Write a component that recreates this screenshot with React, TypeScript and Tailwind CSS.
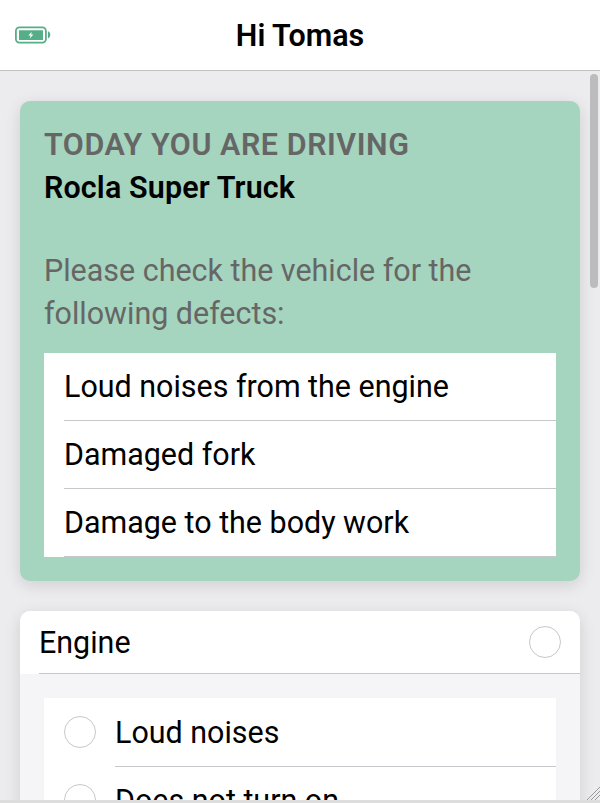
import React from 'react';

const defects = ['Loud noises from the engine', 'Damaged fork', 'Damage to the body work'];
const engineChecks = ['Loud noises', 'Does not turn on'];

function BatteryIcon() {
  return (
    <svg className="h-[18px] w-9" viewBox="0 0 36 18" fill="none">
      <rect x="0.9" y="1.4" width="30" height="15.2" rx="3.6" stroke="#55ae87" strokeWidth="1.8" />
      <rect x="4" y="4.2" width="24" height="9.8" rx="0.6" fill="#55ae87" />
      <path d="M33 5.3C36 6.2 36 11.4 33 12.4Z" fill="#55ae87" />
      <path d="M16.8 5.8L13.3 9.5H15.6L14.8 12.4L18.4 8.6H16.1Z" fill="white" />
    </svg>
  );
}

function Radio() {
  return <span className="size-8 shrink-0 rounded-full border border-[#c8c7cc] bg-white" />;
}

export default function App() {
  return (
    <div className="flex h-[803px] w-[600px] flex-col overflow-hidden bg-[#dedede] font-['Roboto',sans-serif] text-[30.45px] leading-[42.5px] text-black">
      <header className="grid h-[71px] shrink-0 grid-cols-[1fr_auto_1fr] items-center border-b border-[#c2c1c3] bg-white px-[15px]">
        <BatteryIcon />
        <h1 className="pt-[3px] font-semibold">Hi Tomas</h1>
      </header>
      <main className="relative h-[729px] shrink-0 overflow-hidden bg-[#ecebed] px-5 pt-[30px]">
        <section className="h-[480px] rounded-[10px] bg-[#a5d4bf] px-6 pt-[23px] shadow-[0_4px_16px_rgba(0,0,0,0.12)]">
          <h2 className="font-semibold tracking-[0.57px] text-[#666]">TODAY YOU ARE DRIVING</h2>
          <p className="font-semibold tracking-[0.14px]">Rocla Super Truck</p>
          <p className="mt-[41px] text-[#666]">
            Please check the vehicle for the
            <br />
            following defects:
          </p>
          <ul className="mt-[18px] h-[204px] bg-white pl-5">
            {defects.map((defect) => (
              <li key={defect} className="flex h-[68px] items-center border-b border-[#c8c7cc] pt-px">
                {defect}
              </li>
            ))}
          </ul>
        </section>
        <section className="mt-[30px] h-[400px] overflow-hidden rounded-[10px] bg-[#f5f4f6] shadow-[0_4px_16px_rgba(0,0,0,0.12)]">
          <div className="h-[63px] bg-white pl-[19px]">
            <div className="flex h-full items-center justify-between border-b border-[#c8c7cc] pr-[19px]">
              <span className="pt-[3px]">Engine</span>
              <Radio />
            </div>
          </div>
          <ul className="mx-6 mt-6 bg-white pt-px pl-5">
            {engineChecks.map((check) => (
              <li key={check} className="flex h-[68px] items-center gap-[19px]">
                <span className="flex pb-[2px]">
                  <Radio />
                </span>
                <span className="flex h-full flex-1 items-center border-b border-[#c8c7cc] pt-px">{check}</span>
              </li>
            ))}
          </ul>
        </section>
        <div className="absolute top-[3px] right-[2px] h-[214px] w-2 rounded-full bg-[#bcbbbd]" />
        <svg className="absolute right-0 bottom-0 size-[14px]" viewBox="0 0 14 14" stroke="#999" strokeWidth="1">
          <path d="M1 14L14 1M5 14L14 5M9 14L14 9" />
        </svg>
      </main>
    </div>
  );
}
